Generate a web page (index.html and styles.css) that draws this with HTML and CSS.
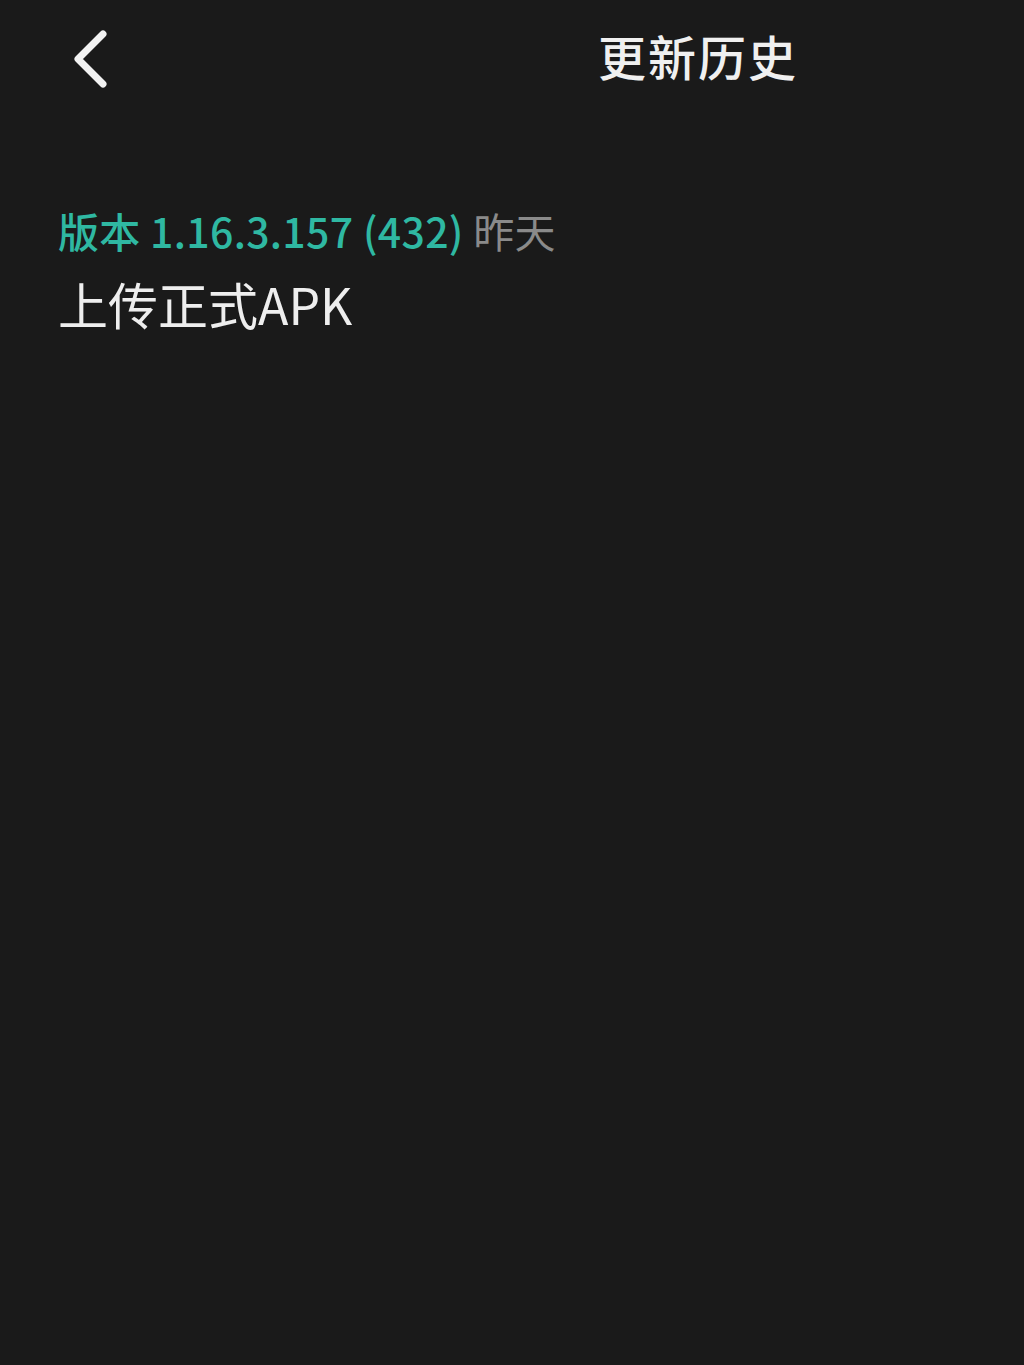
FILE: index.html
```html
<!DOCTYPE html>
<html lang="zh-CN">
<head>
<meta charset="utf-8">
<title>更新历史</title>
<link rel="stylesheet" href="styles.css">
</head>
<body>
<div class="page">
  <header class="topbar">
    <div class="back">
      <svg width="40" height="62" viewBox="0 0 40 62" aria-hidden="true">
        <polyline points="33,6 8,31 33,56" fill="none" stroke="#f2f2f2" stroke-width="7" stroke-linecap="round" stroke-linejoin="round"/>
      </svg>
    </div>
    <h1 class="title">更新历史</h1>
  </header>
  <main class="list">
    <section class="entry">
      <div class="meta"><span class="version">版本 1.16.3.157 (432)</span> <span class="date">昨天</span></div>
      <div class="desc">上传正式APK</div>
    </section>
  </main>
</div>
</body>
</html>
```
FILE: styles.css
```css
html, body {
  margin: 0;
  padding: 0;
  background: #1a1a1a;
}
body {
  font-family: "Noto Sans CJK SC", "Noto Sans", sans-serif;
  color: #eeeeee;
}
.page {
  width: 1024px;
  min-height: 1365px;
  background: #1a1a1a;
}
.topbar {
  display: flex;
  align-items: center;
  height: 118px;
  padding-left: 70px;
}
.back {
  display: flex;
  width: 40px;
  height: 62px;
  margin-top: -1px;
}
.title {
  margin: -8px 0 0 488px;
  font-size: 48px;
  font-weight: 500;
  color: #f0f0f0;
  letter-spacing: 2px;
  line-height: 1;
}
.list {
  padding: 86px 0 0 58px;
}
.meta {
  font-size: 41px;
  line-height: 52px;
  letter-spacing: 0.3px;
}
.version {
  color: #2fb8a2;
  font-weight: 500;
}
.date {
  color: #8a8a8a;
}
.desc {
  margin-top: 17px;
  font-size: 50px;
  line-height: 60px;
  color: #eeeeee;
}
```
